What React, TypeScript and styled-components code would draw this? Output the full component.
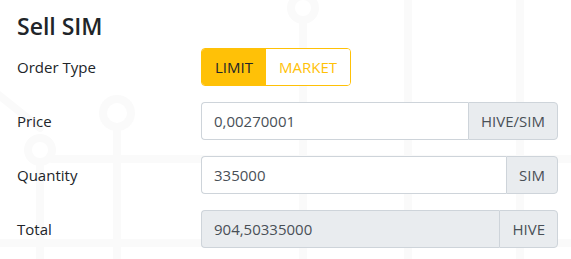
import React from 'react'
import styled, { createGlobalStyle } from 'styled-components'

const GlobalStyle = createGlobalStyle`
  html, body {
    margin: 0;
    padding: 0;
    background: #ffffff;
  }
  body {
    font-family: 'Open Sans', 'Liberation Sans', sans-serif;
    color: #212529;
  }
  * { box-sizing: border-box; }
`

type Field = {
  label: string
  value: string
  unit: string
  readOnly?: boolean
}

const fields: Field[] = [
  { label: 'Price', value: '0,00270001', unit: 'HIVE/SIM' },
  { label: 'Quantity', value: '335000', unit: 'SIM' },
  { label: 'Total', value: '904,50335000', unit: 'HIVE', readOnly: true },
]

const CircuitBackground: React.FC = () => (
  <StyledBackdrop width="571" height="259" viewBox="0 0 571 259">
    <g fill="none" stroke="#fafafa" strokeWidth="8" strokeLinecap="round">
      <path d="M-10 88 L40 128" />
      <circle cx="40" cy="150" r="12" />
      <path d="M40 162 V270" />
      <path d="M52 159 H580" />
      <circle cx="117" cy="113" r="14" />
      <path d="M117 127 V270" />
      <path d="M0 243 H580" />
      <circle cx="303" cy="8" r="12" />
      <path d="M303 20 V270" />
      <path d="M408 -10 V270" />
      <path d="M520 -10 V270" />
    </g>
  </StyledBackdrop>
)

const App: React.FC = () => {
  return (
    <>
      <GlobalStyle />
      <StyledPage>
        <CircuitBackground />
        <StyledCard>
          <StyledTitle>Sell SIM</StyledTitle>
          <StyledRow>
            <StyledLabel>Order Type</StyledLabel>
            <StyledToggle>
              <StyledToggleButton $active>LIMIT</StyledToggleButton>
              <StyledToggleButton>MARKET</StyledToggleButton>
            </StyledToggle>
          </StyledRow>
          {fields.map((f) => (
            <StyledRow key={f.label}>
              <StyledLabel>{f.label}</StyledLabel>
              <StyledInputGroup>
                <StyledInput value={f.value} readOnly $disabled={f.readOnly} />
                <StyledAppend>{f.unit}</StyledAppend>
              </StyledInputGroup>
            </StyledRow>
          ))}
        </StyledCard>
      </StyledPage>
    </>
  )
}

const StyledPage = styled.div`
  position: relative;
  width: 571px;
  height: 259px;
  overflow: hidden;
  background: #ffffff;
`

const StyledBackdrop = styled.svg`
  position: absolute;
  left: 0;
  top: 0;
  pointer-events: none;
`

const StyledCard = styled.div`
  position: relative;
  display: flex;
  flex-direction: column;
  gap: 16px;
  padding: 13px 13px 0 17px;
`

const StyledTitle = styled.h4`
  margin: 0 0 -9px;
  font-size: 23px;
  font-weight: 600;
  line-height: 1.2;
  color: #212529;
`

const StyledRow = styled.div`
  display: grid;
  grid-template-columns: 184px 1fr;
  align-items: center;
  height: 38px;
`

const StyledLabel = styled.label`
  font-size: 15px;
  color: #212529;
`

const StyledToggle = styled.div`
  display: flex;
  justify-self: start;
  height: 38px;
  border: 1px solid #ffc107;
  border-radius: 4px;
  overflow: hidden;
`

const StyledToggleButton = styled.button<{ $active?: boolean }>`
  display: flex;
  align-items: center;
  padding: 0 13px;
  border: 0;
  font-family: inherit;
  font-size: 15px;
  background: ${(p) => (p.$active ? '#ffc107' : '#ffffff')};
  color: ${(p) => (p.$active ? '#212529' : '#ffc107')};
`

const StyledInputGroup = styled.div`
  display: flex;
  height: 38px;
`

const StyledInput = styled.input<{ $disabled?: boolean }>`
  flex: 1;
  min-width: 0;
  height: 38px;
  padding: 0 12px;
  border: 1px solid #ced4da;
  border-right: 0;
  border-radius: 4px 0 0 4px;
  font-family: inherit;
  font-size: 15px;
  color: #495057;
  background: ${(p) => (p.$disabled ? '#e9ecef' : '#ffffff')};
  outline: none;
`

const StyledAppend = styled.span`
  display: flex;
  align-items: center;
  padding: 0 12px;
  border: 1px solid #ced4da;
  border-radius: 0 4px 4px 0;
  background: #e9ecef;
  font-size: 15px;
  color: #495057;
`

export default App
